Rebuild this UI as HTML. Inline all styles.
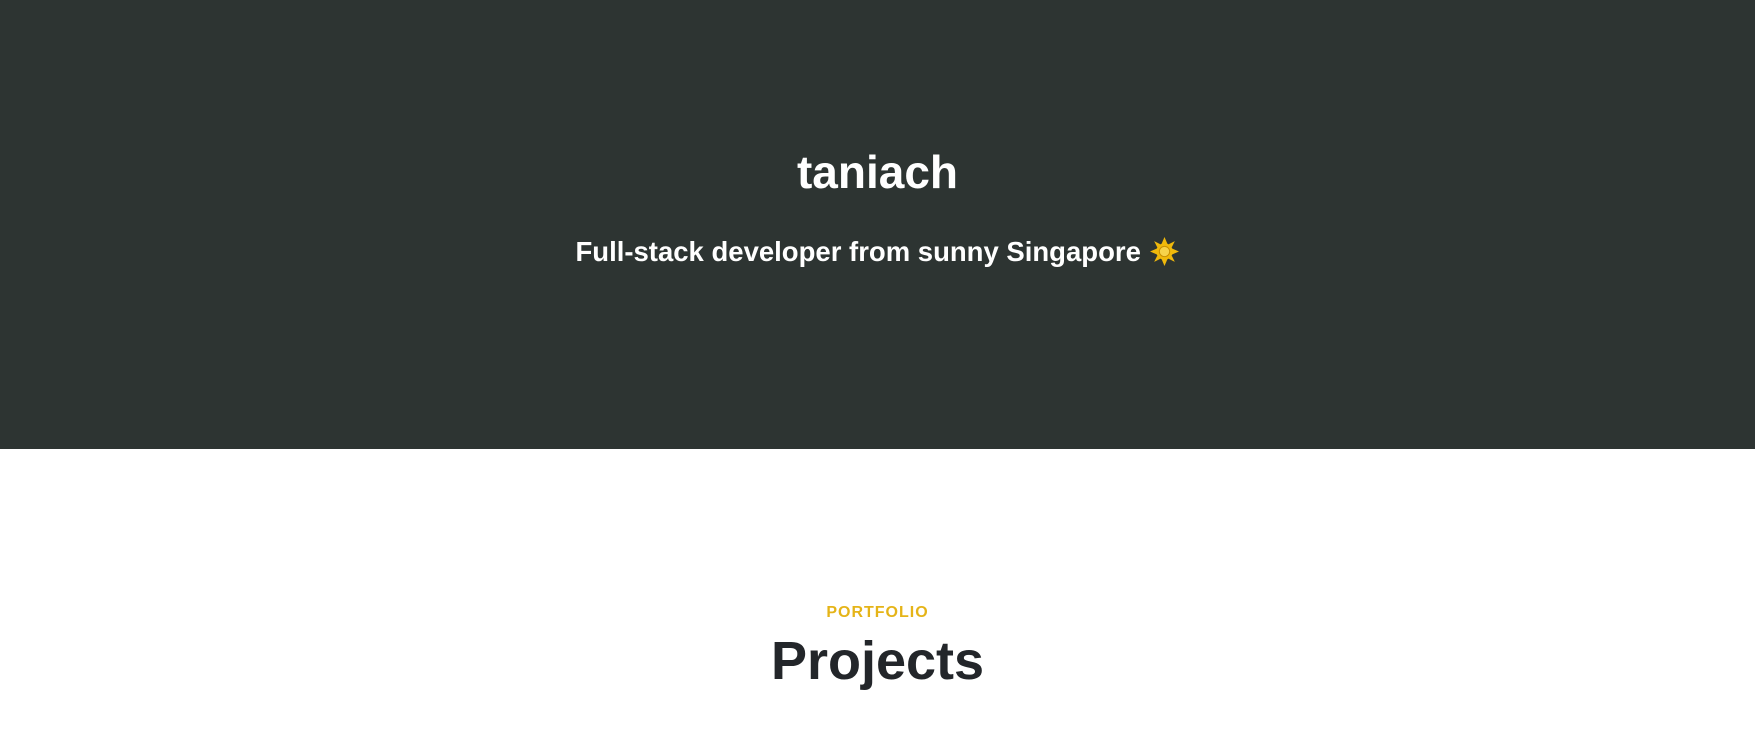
<!DOCTYPE html>
<html><head><meta charset="utf-8"><style>
html,body{margin:0;padding:0;width:1755px;height:740px;overflow:hidden;background:#fff;font-family:"Liberation Sans",sans-serif;}
.hero{position:absolute;left:0;top:0;width:1755px;height:449px;background:#2d3432;}
.t{position:absolute;left:0;width:1755px;text-align:center;font-weight:bold;line-height:1;}
</style></head><body>
<div class="hero"></div>
<div class="t" style="top:149px;font-size:46px;color:#fff;">taniach</div>
<div class="t" style="top:236px;font-size:27.5px;color:#fff;">Full-stack developer from sunny Singapore <svg width="31" height="31" viewBox="0 0 30 30" style="vertical-align:-6px"><g fill="#f0b90b"><polygon points="15,1 18,8 12,8"/><polygon points="15,29 18,22 12,22"/><polygon points="1,15 8,12 8,18"/><polygon points="29,15 22,12 22,18"/><polygon points="5,5 11,8 8,11"/><polygon points="25,5 19,8 22,11"/><polygon points="5,25 11,22 8,19"/><polygon points="25,25 19,22 22,19"/><circle cx="15" cy="15" r="8"/></g><circle cx="15" cy="15" r="5" fill="#f7d34a" stroke="#c98f00" stroke-width="1"/></svg></div>
<div class="t" style="top:605px;font-size:16px;letter-spacing:1px;color:#e5b418;">PORTFOLIO</div>
<div class="t" style="top:634px;font-size:54px;color:#23262a;">Projects</div>
</body></html>
